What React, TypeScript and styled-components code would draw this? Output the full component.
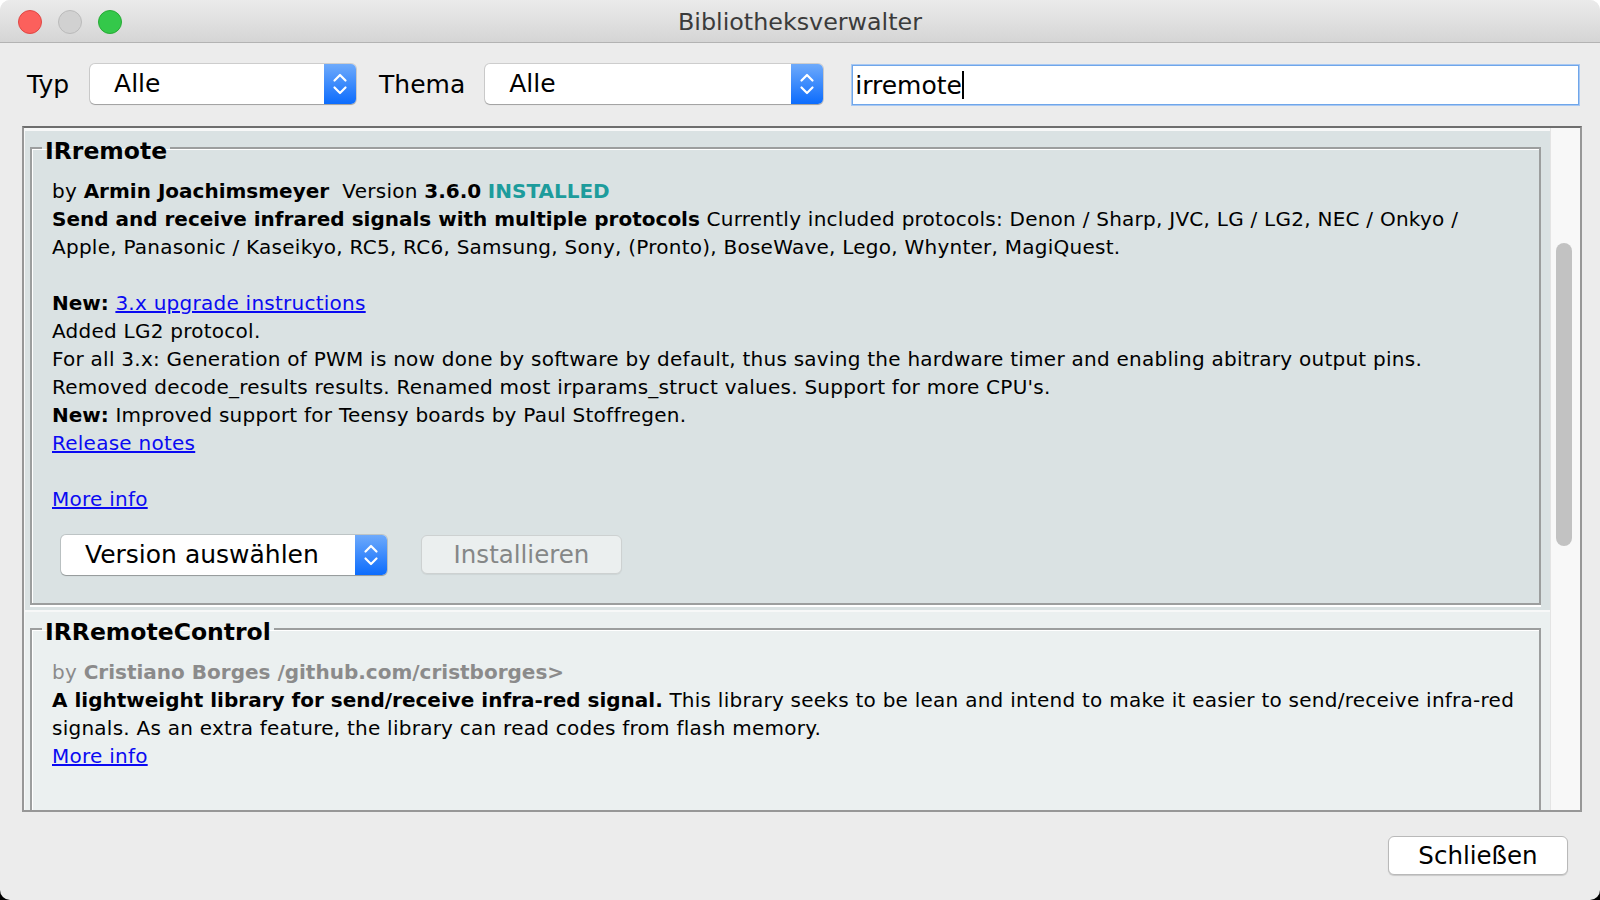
import * as React from 'react';
import styled, { createGlobalStyle } from 'styled-components';

const GlobalStyle = createGlobalStyle`
  html, body {
    margin: 0;
    height: 100%;
  }
  body {
    background: linear-gradient(#ffffff 0, #ffffff 84%, #0f5f66 86%, #000000 93%);
    font-family: 'DejaVu Sans', 'Liberation Sans', sans-serif;
    color: #000;
  }
  #root {
    height: 100%;
  }
`;

interface Line {
  parts: React.ReactNode;
}

const Window = styled('div')`
  height: 900px;
  display: flex;
  flex-direction: column;
  background: #ececec;
  border-radius: 10px;
  overflow: hidden;
`;

const TitleBar = styled('div')`
  height: 43px;
  box-sizing: border-box;
  flex-shrink: 0;
  padding-top: 2px;
  display: grid;
  grid-template-columns: 1fr auto 1fr;
  align-items: center;
  background: linear-gradient(#ebebeb, #d5d5d5);
  border-bottom: 1px solid #b3b3b3;
`;

const Lights = styled('div')`
  display: flex;
  gap: 16px;
  padding-left: 18px;
`;

const Light = styled('span')<{ fill: string; edge: string }>`
  width: 24px;
  height: 24px;
  box-sizing: border-box;
  border-radius: 50%;
  background: ${props => props.fill};
  border: 1px solid ${props => props.edge};
`;

const Title = styled('div')`
  font-size: 23.8px;
  color: #3b3b3b;
`;

const Toolbar = styled('div')`
  display: flex;
  align-items: center;
  padding: 20px 21px 0 27px;
`;

const Label = styled('span')<{ gapRight: number }>`
  font-size: 25px;
  margin-right: ${props => props.gapRight}px;
`;

const SelectBox = styled('div')<{ width: number; gapRight?: number }>`
  width: ${props => props.width}px;
  height: 40px;
  flex-shrink: 0;
  display: flex;
  background: #fff;
  border-radius: 5px;
  overflow: hidden;
  box-shadow: 0 0 0 1px rgba(0, 0, 0, 0.13), 0 1px 1px rgba(0, 0, 0, 0.22);
  margin-right: ${props => props.gapRight || 0}px;
`;

const SelectText = styled('span')`
  flex: 1;
  padding-left: 24px;
  font-size: 25px;
  line-height: 40px;
  white-space: nowrap;
`;

const SelectArrows = styled('span')`
  width: 32px;
  display: flex;
  align-items: center;
  justify-content: center;
  background: linear-gradient(#6eaafb, #0c6cfd);
`;

const SearchField = styled('div')`
  flex: 1;
  height: 40px;
  margin-top: 2px;
  box-sizing: border-box;
  display: flex;
  align-items: center;
  padding-left: 2px;
  background: #fff;
  border: 1px solid #6fa6ea;
  box-shadow: 0 0 0 1px #a8c8f2;
  font-size: 25px;
`;

const Caret = styled('span')`
  width: 2px;
  height: 28px;
  background: #000;
`;

const ListPanel = styled('div')`
  flex: 1;
  min-height: 0;
  margin: 21px 18px 0 22px;
  display: flex;
  border: 2px solid #979797;
  border-top-color: #6e6e6e;
  background: #f7f8f8;
  overflow: hidden;
`;

const ListArea = styled('div')`
  flex: 1;
  min-width: 0;
  display: flex;
  flex-direction: column;
  gap: 2px;
  padding: 3px 0 0 1px;
  overflow: hidden;
`;

const Card = styled('div')<{ selected?: boolean }>`
  flex-shrink: 0;
  padding: 0 9px 5px 5px;
  background: ${props => (props.selected ? '#dae2e3' : '#ebf0f0')};
`;

const Group = styled('fieldset')`
  margin: 0;
  padding: 12px 20px 28px 20px;
  border: 2px solid #9c9e9e;
  box-shadow: inset 1px 1px 0 #fff, 0 2px 0 #fff;
  min-width: 0;
`;

const GroupTitle = styled('legend')`
  margin-left: -10px;
  padding: 6px 3px 0;
  font-size: 23.5px;
  font-weight: bold;
  line-height: 28px;
  background: inherit;
`;

const TextLine = styled('div')<{ muted?: boolean }>`
  font-size: 20px;
  letter-spacing: 0.25px;
  line-height: 28px;
  height: 28px;
  white-space: nowrap;
  color: ${props => (props.muted ? '#8b8b8b' : '#000')};
  b {
    letter-spacing: 0;
  }
`;

const Installed = styled('b')`
  color: #1d9c9c;
`;

const Link = styled('a')`
  color: #0a0af2;
  text-decoration: underline;
  cursor: pointer;
`;

const Controls = styled('div')`
  display: flex;
  gap: 34px;
  margin-top: 22px;
  margin-left: 9px;
`;

const PushButton = styled('div')<{ width: number; disabled?: boolean }>`
  width: ${props => props.width}px;
  height: 39px;
  box-sizing: border-box;
  display: flex;
  align-items: center;
  justify-content: center;
  font-size: 24.5px;
  border-radius: 6px;
  background: ${props => (props.disabled ? '#ebefef' : '#fff')};
  color: ${props => (props.disabled ? '#858787' : '#000')};
  border: 1px solid ${props => (props.disabled ? '#cdd1d1' : '#b9b9b9')};
  box-shadow: ${props => (props.disabled ? '0 1px 1px rgba(0,0,0,0.06)' : '0 1px 1px rgba(0,0,0,0.15)')};
`;

const ScrollTrack = styled('div')`
  width: 30px;
  flex-shrink: 0;
  box-sizing: border-box;
  padding: 115px 0 0 5px;
  background: #f8f8f8;
  border-left: 1px solid #e4e4e4;
`;

const ScrollThumb = styled('div')`
  width: 16px;
  height: 303px;
  border-radius: 8px;
  background: #c2c2c2;
`;

const Footer = styled('div')`
  height: 88px;
  flex-shrink: 0;
  display: flex;
  justify-content: flex-end;
  align-items: flex-start;
  padding: 24px 32px 0 0;
  box-sizing: border-box;
`;

const Arrows = () => (
  <svg width="16" height="26" viewBox="0 0 16 26">
    <path d="M2.5 9.5 L8 4 L13.5 9.5" fill="none" stroke="#fff" strokeWidth="2.2" strokeLinecap="round" strokeLinejoin="round" />
    <path d="M2.5 16.5 L8 22 L13.5 16.5" fill="none" stroke="#fff" strokeWidth="2.2" strokeLinecap="round" strokeLinejoin="round" />
  </svg>
);

const Select: React.FunctionComponent<{ value: string; width: number; gapRight?: number }> = props => (
  <SelectBox width={props.width} gapRight={props.gapRight}>
    <SelectText>{props.value}</SelectText>
    <SelectArrows>
      <Arrows />
    </SelectArrows>
  </SelectBox>
);

const irremoteLines: Line[] = [
  {
    parts: (
      <>
        by <b>Armin Joachimsmeyer</b>&nbsp; Version <b>3.6.0</b> <Installed>INSTALLED</Installed>
      </>
    )
  },
  {
    parts: (
      <>
        <b>Send and receive infrared signals with multiple protocols</b> Currently included protocols: Denon /
        Sharp, JVC, LG / LG2, NEC / Onkyo /
      </>
    )
  },
  { parts: 'Apple, Panasonic / Kaseikyo, RC5, RC6, Samsung, Sony, (Pronto), BoseWave, Lego, Whynter, MagiQuest.' },
  { parts: '' },
  {
    parts: (
      <>
        <b>New:</b> <Link>3.x upgrade instructions</Link>
      </>
    )
  },
  { parts: 'Added LG2 protocol.' },
  {
    parts:
      'For all 3.x: Generation of PWM is now done by software by default, thus saving the hardware timer and enabling abitrary output pins.'
  },
  { parts: "Removed decode_results results. Renamed most irparams_struct values. Support for more CPU's." },
  {
    parts: (
      <>
        <b>New:</b> Improved support for Teensy boards by Paul Stoffregen.
      </>
    )
  },
  { parts: <Link>Release notes</Link> },
  { parts: '' },
  { parts: <Link>More info</Link> }
];

const App: React.FunctionComponent = () => {
  return (
    <Window>
      <GlobalStyle />
      <TitleBar>
        <Lights>
          <Light fill="#fc605c" edge="#df4744" />
          <Light fill="#d1d1d1" edge="#bababa" />
          <Light fill="#34c84a" edge="#27aa35" />
        </Lights>
        <Title>Bibliotheksverwalter</Title>
        <div />
      </TitleBar>

      <Toolbar>
        <Label gapRight={21}>Typ</Label>
        <Select value="Alle" width={266} gapRight={23} />
        <Label gapRight={20}>Thema</Label>
        <Select value="Alle" width={338} gapRight={29} />
        <SearchField>
          irremote
          <Caret />
        </SearchField>
      </Toolbar>

      <ListPanel>
        <ListArea>
          <Card selected>
            <Group>
              <GroupTitle>IRremote</GroupTitle>
              {irremoteLines.map((line, i) => (
                <TextLine key={i}>{line.parts}</TextLine>
              ))}
              <Controls>
                <Select value="Version auswählen" width={326} />
                <PushButton width={201} disabled>
                  Installieren
                </PushButton>
              </Controls>
            </Group>
          </Card>
          <Card>
            <Group>
              <GroupTitle>IRRemoteControl</GroupTitle>
              <TextLine muted>
                by <b>Cristiano Borges /github.com/cristborges&gt;</b>
              </TextLine>
              <TextLine>
                <b>A lightweight library for send/receive infra-red signal.</b> This library seeks to be lean and
                intend to make it easier to send/receive infra-red
              </TextLine>
              <TextLine>signals. As an extra feature, the library can read codes from flash memory.</TextLine>
              <TextLine>
                <Link>More info</Link>
              </TextLine>
              <TextLine />
              <TextLine />
            </Group>
          </Card>
        </ListArea>
        <ScrollTrack>
          <ScrollThumb />
        </ScrollTrack>
      </ListPanel>

      <Footer>
        <PushButton width={180}>Schließen</PushButton>
      </Footer>
    </Window>
  );
};

export default App;
